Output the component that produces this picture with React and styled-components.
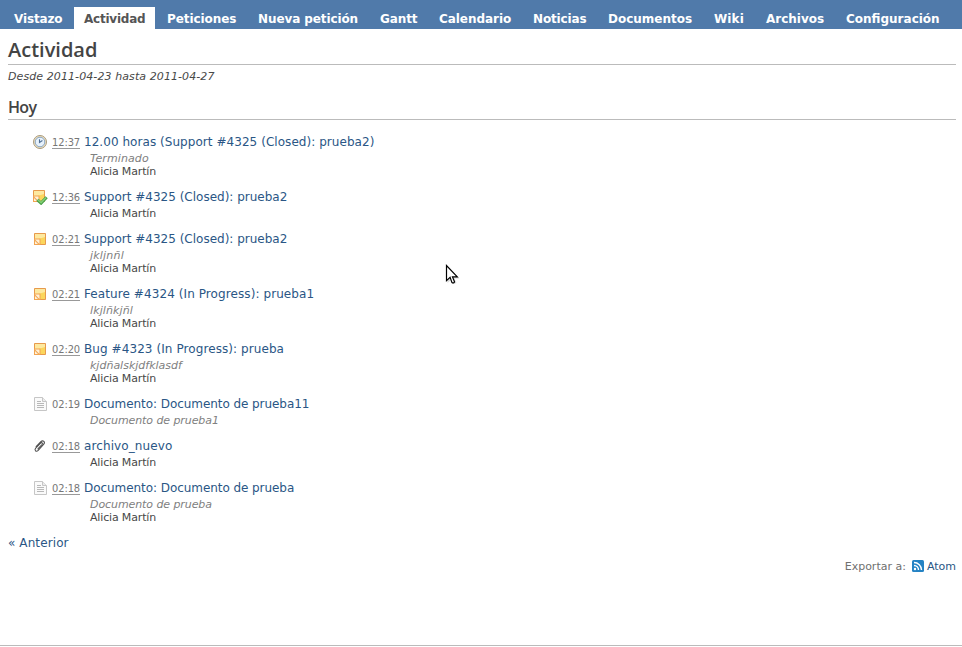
import React from 'react';
import styled, { createGlobalStyle } from 'styled-components';

const GlobalStyle = createGlobalStyle`
  * { box-sizing: border-box; }
  html, body { margin: 0; padding: 0; background: #fff; overflow: hidden; }
  body { font-family: "DejaVu Sans", Verdana, sans-serif; font-size: 12px; color: #484848; }
  a { color: #2a5685; text-decoration: none; }
`;

const Page = styled.div`
  display: flex;
  flex-direction: column;
  height: 647px;
  width: 962px;
`;

const MainMenu = styled.nav`
  display: flex;
  align-items: flex-end;
  gap: 2px;
  height: 29px;
  padding-left: 4px;
  background: #507aaa;
`;

const Tab = styled.a`
  && { color: ${(p) => (p.$selected ? '#555' : '#fff')}; }
  width: ${(p) => p.$w}px;
  height: 22px;
  padding-left: 10px;
  line-height: 24px;
  font-weight: bold;
  font-size: 12px;
  letter-spacing: ${(p) => p.$ls || 0}px;
  white-space: nowrap;
  background: ${(p) => (p.$selected ? '#fff' : 'transparent')};
`;

const Content = styled.main`
  flex: 1;
  padding: 7px 6px 0 8px;
`;

const Title = styled.h2`
  margin: 0;
  height: 29px;
  border-bottom: 1px solid #bbb;
  font: 600 20px/28px "Open Sans", sans-serif;
  color: #444;
`;

const Period = styled.p`
  margin: 4px 0 0;
  font-size: 11px;
  line-height: 15px;
  font-style: italic;
  letter-spacing: 0.09px;
`;

const DayTitle = styled.h3`
  margin: 11px 0 12px;
  height: 25px;
  border-bottom: 1px solid #bbb;
  font: 600 16px/24px "Open Sans", sans-serif;
  letter-spacing: -0.7px;
  color: #444;
`;

const Entries = styled.ul`
  margin: 0;
  padding: 0 0 0 24px;
  list-style: none;
`;

const Entry = styled.li`
  padding-bottom: 9px;
`;

const Heading = styled.div`
  display: flex;
  align-items: center;
  height: 20px;
  white-space: nowrap;
`;

const IconBox = styled.span`
  display: flex;
  width: 20px;
  height: 16px;
  svg { display: block; }
`;

const Time = styled.span`
  width: 28px;
  height: 14px;
  margin-right: 4px;
  font: 11px/15px "DejaVu Sans Condensed", "DejaVu Sans", sans-serif;
  font-stretch: condensed;
  letter-spacing: -0.1px;
  color: #777;
  border-bottom: 1px solid ${(p) => (p.$plain ? 'transparent' : '#999')};
`;

const EntryLink = styled.a`
  font-size: 12px;
  line-height: 20px;
  letter-spacing: ${(p) => p.$ls || 0}px;
`;

const Description = styled.div`
  padding-left: 58px;
  font-size: 11px;
  line-height: 13px;
  font-style: italic;
  letter-spacing: ${(p) => p.$ls || 0}px;
  color: #808080;
`;

const Author = styled.div`
  padding-left: 58px;
  font-size: 11px;
  line-height: 13px;
  letter-spacing: -0.16px;
`;

const Previous = styled.div`
  line-height: 16px;
  padding-top: 2px;
  letter-spacing: 0.1px;
`;

const Export = styled.div`
  display: flex;
  justify-content: flex-end;
  align-items: center;
  height: 16px;
  margin-top: 7px;
  font-size: 11px;
  color: #707070;
  svg { margin: 0 3px 0 6px; }
`;

const Footer = styled.footer`
  height: 2px;
  border-top: 1px solid #bbb;
`;

const Pointer = styled.svg`
  position: absolute;
  left: 445px;
  top: 264px;
`;

const ClockIcon = () => (
  <svg width="16" height="16" viewBox="0 0 16 16">
    <circle cx="8" cy="8" r="6.5" fill="#f0e2c0" stroke="#a8997c" strokeWidth="1" />
    <circle cx="8" cy="8" r="4.8" fill="#e6f1fb" stroke="#7f9dbd" strokeWidth=".9" />
    <path d="M7.5 5.2v3.3l2.9-2" fill="none" stroke="#4f6f94" strokeWidth="1.1" />
  </svg>
);

const Note = () => (
  <>
    <path d="M2.5 2.5h11v11h-11z" fill="#fbd65c" stroke="#e79a4c" />
    <path d="M3 3h10v3L3 9z" fill="#fde9a0" />
    <path d="M2 7.5h6.5V14H2z" fill="#f2a552" />
    <path d="M3 8.5h4.5V13z" fill="#fff2d8" />
    <path d="M3 10v3h3z" fill="#fff2d8" />
  </>
);

const NoteIcon = () => (
  <svg width="16" height="16" viewBox="0 0 16 16"><Note /></svg>
);

const NoteDoneIcon = () => (
  <svg width="16" height="16" viewBox="0 0 16 16">
    <g transform="translate(-1 -1)"><Note /></g>
    <path d="M5.4 10.8l3.7 3.3 5.5-5.8" fill="none" stroke="#459c45" strokeWidth="3.1" />
    <path d="M5.8 10.7l3.3 2.9 5-5.1" fill="none" stroke="#83cf74" strokeWidth="1.5" />
  </svg>
);

const DocumentIcon = () => (
  <svg width="16" height="16" viewBox="0 0 16 16">
    <path d="M2.5 1.5h8l4 4v9h-12z" fill="#fafafa" stroke="#c6c6c6" />
    <path d="M10.5 1.5v4h4" fill="#ececec" stroke="#c6c6c6" />
    <path d="M5 5.5h4M5 7.5h7M5 9.5h7M5 11.5h7" stroke="#b8b8b8" />
  </svg>
);

const ClipIcon = () => (
  <svg width="16" height="16" viewBox="0 0 16 16">
    <g fill="none" stroke="#505050" strokeWidth="1.05" strokeLinecap="round">
      <path d="M4.1 8.5l4.5-4.6c2.5-2.4 5.1.1 3 2.5l-5.4 6c-2.1 2-4.2-.1-2.5-2.2l4.9-5.1c1.3-1.1 2.5.1 1.4 1.4l-4.1 4.4" />
    </g>
  </svg>
);

const AtomIcon = () => (
  <svg width="12" height="12" viewBox="0 0 12 12">
    <rect width="12" height="12" rx="1.5" fill="#2583c4" />
    <circle cx="3" cy="9" r="1.2" fill="#fff" />
    <path d="M2 5.5a4.5 4.5 0 0 1 4.5 4.5M2 2.5a7.5 7.5 0 0 1 7.5 7.5" fill="none" stroke="#fff" strokeWidth="1.4" />
  </svg>
);

const icons = { clock: ClockIcon, note: NoteIcon, done: NoteDoneIcon, doc: DocumentIcon, clip: ClipIcon };

const tabs = [
  ['Vistazo', 68, -0.15], ['Actividad', 81, -0.22], ['Peticiones', 89, -0.08], ['Nueva petición', 120, -0.1],
  ['Gantt', 57, -0.1], ['Calendario', 92, -0.05], ['Noticias', 73, -0.15], ['Documentos', 104],
  ['Wiki', 50, 0.1], ['Archivos', 78], ['Configuración', 114],
];

const entries = [
  { icon: 'clock', time: '12:37', title: '12.00 horas (Support #4325 (Closed): prueba2)', ls: 0.05, text: 'Terminado', textLs: 0.1, author: true },
  { icon: 'done', time: '12:36', title: 'Support #4325 (Closed): prueba2', author: true },
  { icon: 'note', time: '02:21', title: 'Support #4325 (Closed): prueba2', text: 'jkljnñl', textLs: 0.2, author: true },
  { icon: 'note', time: '02:21', title: 'Feature #4324 (In Progress): prueba1', ls: 0.085, text: 'lkjlñkjñl', textLs: 0.12, author: true },
  { icon: 'note', time: '02:20', title: 'Bug #4323 (In Progress): prueba', ls: 0.08, text: 'kjdñalskjdfklasdf', author: true },
  { icon: 'doc', time: '02:19', title: 'Documento: Documento de prueba11', ls: -0.06, text: 'Documento de prueba1', textLs: -0.08, plain: true },
  { icon: 'clip', time: '02:18', title: 'archivo_nuevo', ls: 0.1, author: true },
  { icon: 'doc', time: '02:18', title: 'Documento: Documento de prueba', ls: -0.06, text: 'Documento de prueba', textLs: -0.08, author: true },
];

export default function App() {
  return (
    <Page>
      <GlobalStyle />
      <MainMenu>
        {tabs.map(([label, w, ls]) => (
          <Tab key={label} $w={w} $ls={ls} $selected={label === 'Actividad'}>{label}</Tab>
        ))}
      </MainMenu>
      <Content>
        <Title>Actividad</Title>
        <Period>Desde 2011-04-23 hasta 2011-04-27</Period>
        <DayTitle>Hoy</DayTitle>
        <Entries>
          {entries.map((e, i) => {
            const Icon = icons[e.icon];
            return (
              <Entry key={i}>
                <Heading>
                  <IconBox><Icon /></IconBox>
                  <Time $plain={e.plain}>{e.time}</Time>
                  <EntryLink $ls={e.ls}>{e.title}</EntryLink>
                </Heading>
                {e.text && <Description $ls={e.textLs}>{e.text}</Description>}
                {e.author && <Author>Alicia Martín</Author>}
              </Entry>
            );
          })}
        </Entries>
        <Previous><a>« Anterior</a></Previous>
        <Export>Exportar a:<AtomIcon /><a>Atom</a></Export>
      </Content>
      <Footer />
      <Pointer width="16" height="22" viewBox="0 0 16 22">
        <path d="M2.5 3v16l4-3.5 2 4.5 3-1-2-4.5h5z" fill="#000" opacity=".15" />
        <path d="M1.5 1.5v15.2l3.6-3.3 1.8 5c.9 1.2 2.9.3 2.5-1l-1.9-4.5h4.8z" fill="#fff" stroke="#000" strokeWidth="1.2" />
      </Pointer>
    </Page>
  );
}
